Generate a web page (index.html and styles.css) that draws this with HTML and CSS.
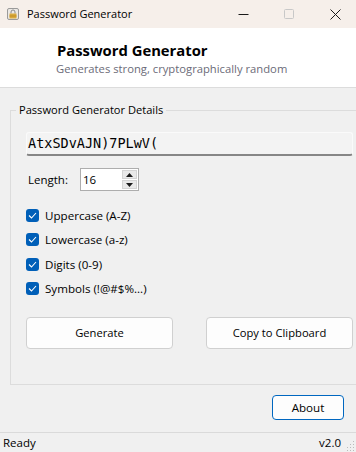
FILE: index.html
```html
<!DOCTYPE html>
<html>
<head>
<meta charset="utf-8">
<link rel="stylesheet" href="styles.css">
</head>
<body>
<div class="window">
  <div class="titlebar">
    <svg class="appicon" width="12" height="12" viewBox="0 0 12 12">
      <rect x="0.5" y="0.5" width="11" height="11" rx="1.5" fill="#ebe8e4" stroke="#9a9a9a"/>
      <path d="M4 5.5V4a2 2 0 0 1 4 0v1.5" fill="none" stroke="#8a8a8a" stroke-width="1"/>
      <rect x="2.5" y="5.5" width="7" height="5" fill="#d9aa3c"/>
      <rect x="2.5" y="7.5" width="7" height="1" fill="#bf8c22"/>
    </svg>
    <span class="wtitle">Password Generator</span>
    <div class="wctrls">
      <span class="wbtn"><svg width="11" height="11" viewBox="0 0 11 11"><path d="M0.5 5.5h10" stroke="#1a1a1a" stroke-width="1"/></svg></span>
      <span class="wbtn"><svg width="11" height="11" viewBox="0 0 11 11"><rect x="0.5" y="0.5" width="9" height="9" rx="1" fill="none" stroke="#c8c8c8"/></svg></span>
      <span class="wbtn"><svg width="11" height="11" viewBox="0 0 11 11"><path d="M0.5 0.5L10.5 10.5M10.5 0.5L0.5 10.5" stroke="#1a1a1a" stroke-width="1"/></svg></span>
    </div>
  </div>
  <div class="header">
    <div class="htitle">Password Generator</div>
    <div class="hsub">Generates strong, cryptographically random</div>
  </div>
  <div class="main">
    <fieldset class="group">
      <legend>Password Generator Details</legend>
      <div class="gbody">
        <div class="pwfield">AtxSDvAJN)7PLwV(</div>
        <div class="lenrow">
          <span class="lenlabel">Length:</span>
          <div class="spin">
            <span class="spinval">16</span>
            <div class="spinbtns">
              <span class="sbtn"><svg width="7" height="4" viewBox="0 0 7 4"><path d="M0 4L3.5 0L7 4Z" fill="#1a1a1a"/></svg></span>
              <span class="sbtn"><svg width="7" height="4" viewBox="0 0 7 4"><path d="M0 0L3.5 4L7 0Z" fill="#1a1a1a"/></svg></span>
            </div>
          </div>
        </div>
        <div class="checks">
          <label class="chk"><span class="box"><svg width="9" height="7" viewBox="0 0 9 7"><path d="M1 3.5L3.5 6L8 1" fill="none" stroke="#fff" stroke-width="1.1"/></svg></span>Uppercase (A-Z)</label>
          <label class="chk"><span class="box"><svg width="9" height="7" viewBox="0 0 9 7"><path d="M1 3.5L3.5 6L8 1" fill="none" stroke="#fff" stroke-width="1.1"/></svg></span>Lowercase (a-z)</label>
          <label class="chk"><span class="box"><svg width="9" height="7" viewBox="0 0 9 7"><path d="M1 3.5L3.5 6L8 1" fill="none" stroke="#fff" stroke-width="1.1"/></svg></span>Digits (0-9)</label>
          <label class="chk"><span class="box"><svg width="9" height="7" viewBox="0 0 9 7"><path d="M1 3.5L3.5 6L8 1" fill="none" stroke="#fff" stroke-width="1.1"/></svg></span>Symbols (!@#$%...)</label>
        </div>
        <div class="btnrow">
          <button class="btn wide">Generate</button>
          <button class="btn wide">Copy to Clipboard</button>
        </div>
      </div>
    </fieldset>
    <div class="aboutrow">
      <button class="btn about">About</button>
    </div>
  </div>
  <div class="status">
    <span>Ready</span>
    <span class="ver">v2.0</span>
    <svg class="grip" width="8" height="10" viewBox="0 0 8 10">
      <rect x="6" y="0" width="1" height="1" fill="#bbb"/>
      <rect x="3" y="3" width="1" height="1" fill="#bbb"/><rect x="6" y="3" width="1" height="1" fill="#bbb"/>
      <rect x="0" y="6" width="1" height="1" fill="#bbb"/><rect x="3" y="6" width="1" height="1" fill="#bbb"/><rect x="6" y="6" width="1" height="1" fill="#bbb"/>
      <rect x="0" y="9" width="1" height="1" fill="#bbb"/><rect x="3" y="9" width="1" height="1" fill="#bbb"/><rect x="6" y="9" width="1" height="1" fill="#bbb"/>
    </svg>
  </div>
</div>
</body>
</html>
```
FILE: styles.css
```css
* { box-sizing: border-box; }
html, body { margin: 0; padding: 0; }
body {
  width: 356px;
  height: 452px;
  overflow: hidden;
  background: #f0f0f0;
  font-family: "Open Sans", "Noto Sans", sans-serif;
  font-size: 11.3px;
  color: #000;
}
.window { width: 356px; height: 452px; display: flex; flex-direction: column; }
.titlebar {
  height: 28px;
  flex: none;
  background: #f6efea;
  display: flex;
  align-items: center;
  padding-left: 7px;
}
.appicon { flex: none; margin-top: -1px; }
.wtitle { margin-left: 8px; font-size: 11px; line-height: 14px; }
.wctrls { margin-left: auto; margin-right: -2px; display: flex; height: 28px; }
.wbtn { width: 46px; display: flex; align-items: center; justify-content: center; }
.header {
  height: 60px;
  flex: none;
  background: #fff;
  border-bottom: 1px solid #dcdcdc;
  padding: 12px 0 0 57px;
}
.htitle { font-weight: 700; font-size: 14.8px; line-height: 20px; }
.hsub { color: #6b6b78; font-size: 11.25px; line-height: 15px; margin-top: 1px; margin-left: -1px; }
.main { flex: 1; padding: 15px 0 0 10px; display: flex; flex-direction: column; }
.group {
  margin: 0;
  width: 362px;
  height: 282px;
  border: 1px solid #dcdcdc;
  border-radius: 0;
  padding: 0;
  flex: none;
}
.group legend { padding: 0 3px; margin-left: 5px; font-size: 11.1px; line-height: 14px; }
.gbody { padding: 15px 0 0 15px; }
.pwfield {
  width: 327px;
  height: 24px;
  background: #f3f3f3;
  border: 1px solid #fafafa;
  border-bottom: 2px solid #868686;
  border-radius: 3px;
  font-family: "DejaVu Sans Mono", "Liberation Mono", monospace;
  font-size: 13.5px;
  line-height: 21px;
  padding-left: 1px;
}
.lenrow { display: flex; align-items: center; margin-top: 12px; }
.lenlabel { width: 54px; padding-left: 2px; font-size: 11.5px; }
.spin {
  width: 59px; height: 23px;
  background: #fff;
  border: 1px solid #adadad;
  display: flex;
  align-items: center;
  padding-left: 2px;
  font-size: 11.5px;
}
.spinval { flex: 1; }
.spinbtns { width: 15px; height: 19px; display: flex; flex-direction: column; gap: 1px; margin-right: 1px; }
.sbtn { flex: 1; background: #e9e9e9; border: 1px solid #d4d4d4; display: flex; align-items: center; justify-content: center; }
.checks { display: flex; flex-direction: column; gap: 10.67px; margin-top: 17px; }
.chk { display: flex; align-items: center; height: 14px; font-size: 11.6px; }
.box {
  width: 13px; height: 13px;
  background: #005fb8;
  border-radius: 3px;
  margin-right: 6px;
  display: flex; align-items: center; justify-content: center;
}
.btnrow { display: flex; gap: 33px; margin-top: 21px; }
.btn {
  font-family: inherit;
  font-size: 11.2px;
  color: #000;
  background: #fdfdfd;
  border: 1px solid #d0d0d0;
  border-radius: 4px;
  padding: 0;
}
.wide { width: 147px; height: 32px; }
.aboutrow { display: flex; justify-content: flex-end; padding-right: 12px; margin-top: 10px; }
.about { width: 72px; height: 25px; border-color: #0067c0; font-size: 11.6px; }
.status {
  height: 20px;
  flex: none;
  border-top: 1px solid #dadada;
  display: flex;
  align-items: center;
  padding: 0 0 0 3px;
  font-size: 11.5px;
}
.ver { margin-left: auto; margin-right: 6px; }
.grip { margin-right: 1px; margin-top: 6px; }
```
